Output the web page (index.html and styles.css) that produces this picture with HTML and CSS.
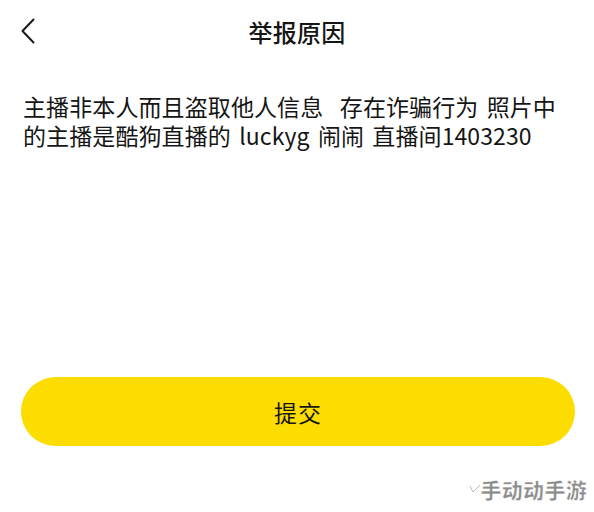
FILE: index.html
```html
<!DOCTYPE html>
<html lang="zh-CN">
<head>
    <meta charset="UTF-8">
    <meta name="viewport" content="width=device-width, initial-scale=1.0">
    <title>举报原因</title>
    <link rel="stylesheet" href="styles.css">
</head>
<body>
    <header class="nav-bar">
        <button class="back-btn" aria-label="返回">
            <svg width="16" height="26" viewBox="0 0 16 26">
                <path d="M13.5 1.5 L2.5 13 L13.5 24.5" fill="none" stroke="#1a1a1a" stroke-width="2" stroke-linecap="round" stroke-linejoin="round"/>
            </svg>
        </button>
        <h1 class="nav-title">举报原因</h1>
    </header>

    <main>
        <div class="reason">主播非本人而且盗取他人信息&nbsp; 存在诈骗行为 照片中的主播是酷狗直播的 luckyg 闹闹 直播间1403230</div>
        <button class="submit-btn">提交</button>
    </main>

    <div class="watermark">
        <svg width="12" height="10" viewBox="0 0 12 10">
            <path d="M1 2 L4 8 L11 1" fill="none" stroke="#bbbbbb" stroke-width="1"/>
        </svg>
        <span>手动动手游</span>
    </div>
</body>
</html>
```

FILE: styles.css
```css
:root {
    --text-color: #151515;
    --brand-yellow: #fddd00;
}

body {
    font-family: "Noto Sans CJK SC", "Noto Sans", sans-serif;
    margin: 0;
    padding: 0;
    background-color: #ffffff;
    color: var(--text-color);
    width: 594px;
    height: 512px;
    overflow: hidden;
    position: relative;
}

.nav-bar {
    height: 64px;
    display: flex;
    align-items: center;
    justify-content: center;
    position: relative;
}

.back-btn {
    position: absolute;
    left: 20px;
    top: 18px;
    padding: 0;
    border: none;
    background: none;
    display: flex;
}

.nav-title {
    margin: 0;
    font-size: 24px;
    font-weight: 500;
    line-height: 30px;
    letter-spacing: 0.3px;
}

.reason {
    height: 285px;
    padding: 28px 20px 0 23px;
    font-size: 23px;
    line-height: 29px;
    letter-spacing: 0.1px;
    word-spacing: 3px;
}

.submit-btn {
    display: block;
    width: 554px;
    height: 69px;
    margin: 0 20px 0 21px;
    border: none;
    border-radius: 35px;
    background-color: var(--brand-yellow);
    color: var(--text-color);
    font-family: inherit;
    font-size: 23px;
    letter-spacing: 1px;
}

.watermark {
    position: absolute;
    right: 7px;
    bottom: 8px;
    display: flex;
    align-items: center;
}

.watermark span {
    font-size: 21px;
    font-weight: 900;
    color: #8c8c8c;
    letter-spacing: 0.3px;
    -webkit-text-stroke: 0.6px #ffffff;
    text-shadow: 0 0 2px #ffffff;
}
```
